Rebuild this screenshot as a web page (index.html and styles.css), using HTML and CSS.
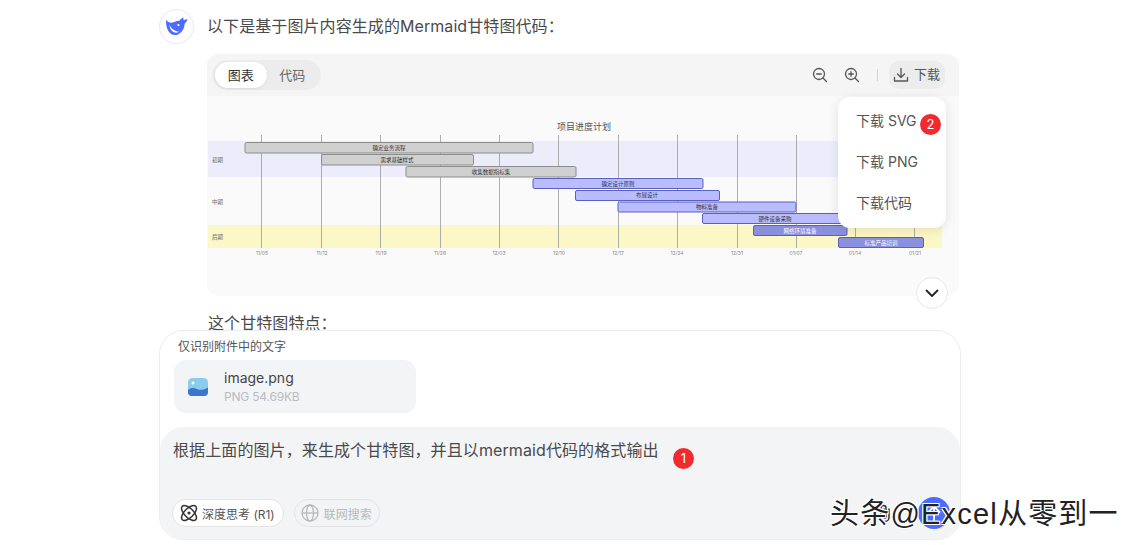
FILE: index.html
```html
<!DOCTYPE html>
<html lang="zh">
<head>
<meta charset="utf-8">
<title>Mermaid 甘特图</title>
<link rel="stylesheet" href="styles.css">
</head>
<body>
<div class="page">
  <main class="chat">
    <div class="msg-head">
      <div class="avatar">
        <svg width="23" height="19" viewBox="0 0 24 20"><path fill="#4d6bfe" d="M1 3C3 6 6 6.500 9 5.500 11.500 4.500 13 3.500 15 4 16 2.500 17.500 1 19.500.5 19 2 19.300 3 20 3.500 21 2.800 22.500 2.300 23.500 2.500 23 4.500 21.500 6 20.500 7 20.500 13 16 19 10 19 5 19 .5 13 1 3z"/><path fill="#fff" d="M4.500 8C6 12 10 15.500 15 15.500 12 17 9.500 16.800 7.500 15 5.500 13 4.500 10.500 4.500 8z"/><circle cx="14" cy="8.500" r="1.200" fill="#fff"/></svg>
      </div>
      <p class="msg-text msg-first">以下是基于图片内容生成的Mermaid甘特图代码：</p>
    </div>
    <section class="card">
      <header class="card-bar">
        <div class="tabs"><span class="tab tab-on">图表</span><span class="tab">代码</span></div>
        <div class="tools">
          <svg class="tool" width="18" height="18" viewBox="0 0 18 18"><circle cx="8" cy="8" r="5.500"/><path d="M5.700 8h4.600M12.200 12.200L15.500 15.500"/></svg>
          <svg class="tool" width="18" height="18" viewBox="0 0 18 18"><circle cx="8" cy="8" r="5.500"/><path d="M5.700 8h4.600M8 5.700v4.600M12.200 12.200L15.500 15.500"/></svg>
          <span class="sep"></span>
          <button class="dl-btn">
            <svg class="tool" width="16" height="16" viewBox="0 0 16 16"><path d="M8 1.500v8.500M4.500 7L8 10.500 11.500 7M1.500 10.500v3.500h13v-3.500"/></svg>
            <span class="dl-label">下载</span>
          </button>
        </div>
      </header>
      <div class="chart">
        <svg class="gantt" width="752" height="200" viewBox="207 96 752 200">
          <rect class="band-a" x="208" y="141" width="734" height="36"/>
          <rect class="band-c" x="208" y="225" width="734" height="23"/>
          <g class="grid">
            <path d="M261.500 135V248M321.500 135V248M380.500 135V248M440.500 135V248M499.500 135V248M558.500 135V248M618.500 135V248M677.500 135V248M737.500 135V248M796.500 135V248M855.500 135V248M914.500 135V248"/>
          </g>
          <text class="g-title" x="584" y="130">项目进度计划</text>
          <g class="bar-grey">
            <rect x="245" y="142.500" width="288" height="10.500" rx="1.500"/>
            <rect x="321.500" y="154.500" width="152" height="10.500" rx="1.500"/>
            <rect x="406" y="166.500" width="170" height="10.500" rx="1.500"/>
          </g>
          <g class="bar-blue">
            <rect x="533" y="178.500" width="170" height="10" rx="1.500"/>
            <rect x="575.500" y="190.500" width="144" height="10" rx="1.500"/>
            <rect x="618" y="202" width="178" height="10" rx="1.500"/>
            <rect x="702.500" y="213.500" width="146" height="10" rx="1.500"/>
          </g>
          <g class="bar-dark">
            <rect x="753.500" y="225.500" width="93.500" height="10" rx="1.500"/>
            <rect x="838.500" y="237.500" width="85" height="10" rx="1.500"/>
          </g>
          <g class="t-in">
            <text x="389" y="149.500">确定业务流程</text>
            <text x="397" y="161.500">需求基础样式</text>
            <text x="491" y="173.500">收集数据指标集</text>
            <text x="618" y="185.500">确定设计原则</text>
            <text x="647" y="197">布展设计</text>
            <text x="707" y="208.500">物料准备</text>
            <text x="775" y="220.500">硬件设备采购</text>
          </g>
          <g class="t-in t-white">
            <text x="800" y="232.500">网络环境准备</text>
            <text x="881" y="244.500">标准产品培训</text>
          </g>
          <g class="t-sec">
            <text x="212" y="162">初期</text>
            <text x="212" y="204">中期</text>
            <text x="212" y="239">后期</text>
          </g>
          <g class="t-axis">
            <text x="262" y="255">11/05</text>
            <text x="322" y="255">11/12</text>
            <text x="381" y="255">11/19</text>
            <text x="440" y="255">11/26</text>
            <text x="499" y="255">12/03</text>
            <text x="559" y="255">12/10</text>
            <text x="618" y="255">12/17</text>
            <text x="677" y="255">12/24</text>
            <text x="737" y="255">12/31</text>
            <text x="796" y="255">01/07</text>
            <text x="855" y="255">01/14</text>
            <text x="915" y="255">01/21</text>
          </g>
        </svg>
      </div>
      <div class="menu">
        <div class="menu-item">下载 SVG</div>
        <div class="menu-item">下载 PNG</div>
        <div class="menu-item">下载代码</div>
        <span class="badge badge-menu">2</span>
      </div>
      <button class="scroll-btn" aria-label="展开">
        <svg width="16" height="16" viewBox="0 0 16 16"><path d="M2.500 5.500L8 11l5.500-5.500"/></svg>
      </button>
    </section>
    <p class="msg-text msg-after">这个甘特图特点：</p>
  </main>

  <section class="composer">
    <div class="attach-note">仅识别附件中的文字</div>
    <div class="file">
      <svg width="20" height="20" viewBox="0 0 20 20"><rect width="20" height="18" y="1" rx="4.500" fill="#8ccbee"/><path fill="#3d75cc" d="M0 13c3-2.500 6-2.500 9-1s7 1 11-1.500V15a4 4 0 0 1-4 4H4a4 4 0 0 1-4-4z"/><circle cx="5" cy="6" r="1.500" fill="#fff"/></svg>
      <div class="file-info">
        <div class="file-name">image.png</div>
        <div class="file-meta">PNG 54.69KB</div>
      </div>
    </div>
    <div class="input">
      <div class="input-text">根据上面的图片，来生成个甘特图，并且以mermaid代码的格式输出<span class="badge badge-input">1</span></div>
      <div class="input-bar">
        <button class="pill">
          <svg width="20" height="20" viewBox="0 0 20 20" fill="none" stroke="#333" stroke-width="1.500"><ellipse cx="10" cy="10" rx="9.500" ry="4.500" transform="rotate(45 10 10)"/><ellipse cx="10" cy="10" rx="9.500" ry="4.500" transform="rotate(-45 10 10)"/><circle cx="10" cy="10" r="1.600" fill="#333" stroke="none"/></svg>
          深度思考 (R1)
        </button>
        <button class="pill pill-off">
          <svg width="18" height="18" viewBox="0 0 18 18" fill="none" stroke="#b8b8b8" stroke-width="1.300"><circle cx="9" cy="9" r="8"/><ellipse cx="9" cy="9" rx="3.500" ry="8"/><path d="M1 9h16"/></svg>
          联网搜索
        </button>
        <div class="input-right">
          <svg class="clip" width="16" height="20" viewBox="0 0 16 20"><path d="M12 6v8.500a4 4 0 0 1-8 0V5a2.500 2.500 0 0 1 5 0v9a1 1 0 0 1-2 0V6"/></svg>
          <button class="send" aria-label="发送">
            <svg width="16" height="18" viewBox="0 0 16 18"><path d="M8 16V3M2.500 8L8 2.500 13.500 8"/></svg>
          </button>
        </div>
      </div>
    </div>
  </section>
  <div class="watermark">头条@Excel从零到一</div>
</div>
</body>
</html>
```
FILE: styles.css
```css
* { box-sizing: border-box; }
html, body { margin: 0; padding: 0; background: #fff; }
body { font-family: Inter, "Noto Sans CJK SC", sans-serif; color: #333; }
.page { position: relative; width: 1136px; height: 545px; overflow: hidden; }

.chat { width: 800px; margin-left: 159px; padding-top: 9px; }
.msg-head { display: flex; align-items: center; gap: 13px; }
.avatar { width: 35px; height: 35px; border-radius: 50%; border: 1px solid #e3e8fb; display: flex; align-items: center; justify-content: center; background: #fff; }
.msg-text { margin: 0; font-size: 16px; line-height: 24px; color: #4a4a4a; letter-spacing: .08px; }
.msg-first { padding-bottom: 2px; }
.msg-after { margin: 15px 0 0 49px; }

.card { position: relative; margin: 10px 0 0 48px; width: 752px; height: 242px; border-radius: 12px; background: #fafafa; overflow: visible; }
.card-bar { height: 42px; background: #f5f5f5; border-radius: 12px 12px 0 0; padding: 6px 14px 0 5px; display: flex; align-items: flex-start; justify-content: space-between; }
.tabs { display: flex; width: 109px; height: 30px; background: #ececec; border-radius: 15px; padding: 2px 3px; }
.tab { width: 52px; height: 26px; border-radius: 13px; font-size: 13px; line-height: 26px; text-align: center; color: #666; }
.tab-on { background: #fff; color: #333; box-shadow: 0 1px 3px rgba(0,0,0,.08); }
.tools { display: flex; align-items: center; height: 28px; margin-top: 1px; }
.tool { fill: none; stroke: #555; stroke-width: 1.300; stroke-linecap: round; stroke-linejoin: round; }
.tools > .tool + .tool { margin-left: 14px; }
.sep { width: 1px; height: 12px; background: #d4d4d4; margin: 0 11px 0 16px; }
.dl-btn { display: flex; align-items: center; gap: 5px; width: 56px; height: 28px; border: 0; border-radius: 10px; background: #ececec; color: #555; font: inherit; font-size: 13px; padding: 0 0 0 4px; }
.dl-label { line-height: 18px; margin-top: -2px; }

.chart { height: 200px; border-radius: 0 0 12px 12px; overflow: hidden; }
.gantt { display: block; }
.band-a { fill: #ececfb; }
.band-c { fill: #fbf7c6; }
.grid path { fill: none; stroke: #a0a0a0; stroke-width: 1; opacity: .85; }
.g-title { font-size: 9px; fill: #555; text-anchor: middle; }
.bar-grey rect { fill: #d0d0d0; stroke: #8c8c8c; stroke-width: 1; }
.bar-blue rect { fill: #b9bdff; stroke: #5a5fc0; stroke-width: 1; }
.bar-dark rect { fill: #8a90dd; stroke: #5a5fc0; stroke-width: 1; }
.t-in text { font-size: 5.500px; fill: #333; text-anchor: middle; }
.t-white text { fill: #fff; }
.t-sec text { font-size: 5.500px; fill: #666; }
.t-axis text { font-size: 5px; fill: #888; text-anchor: middle; }

.menu { position: absolute; left: 631px; top: 43px; width: 108px; height: 131px; padding: 3px 0; background: #fff; border-radius: 12px; box-shadow: 0 2px 12px rgba(0,0,0,.1); }
.menu-item { height: 41px; line-height: 41px; padding-left: 18px; font-size: 14px; color: #555; }
.badge { display: inline-block; width: 21px; height: 21px; line-height: 21px; border-radius: 50%; background: #f02b2f; color: #fff; font-size: 13px; text-align: center; }
.badge-menu { position: absolute; left: 82px; top: 17px; }
.badge-input { position: absolute; left: 513px; top: 21px; }
.scroll-btn { position: absolute; left: 709px; top: 223px; width: 32px; height: 32px; border-radius: 50%; border: 1px solid #e8e8e8; background: #fff; display: flex; align-items: center; justify-content: center; padding: 0; }
.scroll-btn path { fill: none; stroke: #222; stroke-width: 1.800; stroke-linecap: round; stroke-linejoin: round; }

.composer { position: absolute; left: 159px; top: 330px; width: 802px; height: 210px; background: #fff; border: 1px solid #ececec; border-radius: 24px; padding-top: 8px; }
.attach-note { margin-left: 18px; font-size: 12px; line-height: 16px; color: #555; }
.file { display: flex; align-items: center; gap: 16px; margin: 5px 0 0 14px; width: 242px; height: 53px; padding-left: 14px; background: #f3f4f6; border-radius: 12px; }
.file-info { display: flex; flex-direction: column; margin-top: -1px; }
.file-name { font-size: 14px; line-height: 20px; color: #444; }
.file-meta { font-size: 12px; line-height: 17px; color: #b9bcc2; letter-spacing: -.2px; }
.input { position: relative; margin-top: 14px; height: 112px; background: #f3f4f6; border-radius: 24px; padding: 11px 14px 10px 13px; display: flex; flex-direction: column; justify-content: space-between; }
.input-text { font-size: 16px; line-height: 24px; color: #4a4a4a; letter-spacing: .1px; }
.input-bar { display: flex; align-items: center; gap: 10px; margin-left: -1px; }
.pill { display: flex; align-items: center; gap: 3px; height: 28px; padding: 0 8px 0 6px; border: 1px solid #e4e4e4; border-radius: 14px; background: #fff; font: inherit; font-size: 12px; color: #555; }
.pill-off { color: #b8b8b8; background: #f3f4f6; gap: 5px; padding: 0 7px 0 6px; }
.input-right { margin-left: auto; display: flex; align-items: center; gap: 25px; margin-right: -4px; }
.clip { fill: none; stroke: #333; stroke-width: 1.500; stroke-linecap: round; }
.send { width: 32px; height: 32px; border: 0; border-radius: 50%; background: #4d6bfe; padding: 0; display: flex; align-items: center; justify-content: center; }
.send path { fill: none; stroke: #fff; stroke-width: 1.800; stroke-linecap: round; stroke-linejoin: round; }

.watermark { position: absolute; left: 830px; top: 494px; font-family: "Liberation Sans", "Noto Sans CJK SC", sans-serif; font-size: 29px; line-height: 40px; letter-spacing: 1.200px; color: #222; white-space: nowrap; text-shadow: 1px 1px 0 #fff, -1px -1px 0 #fff, 1px -1px 0 #fff, -1px 1px 0 #fff; }
```
